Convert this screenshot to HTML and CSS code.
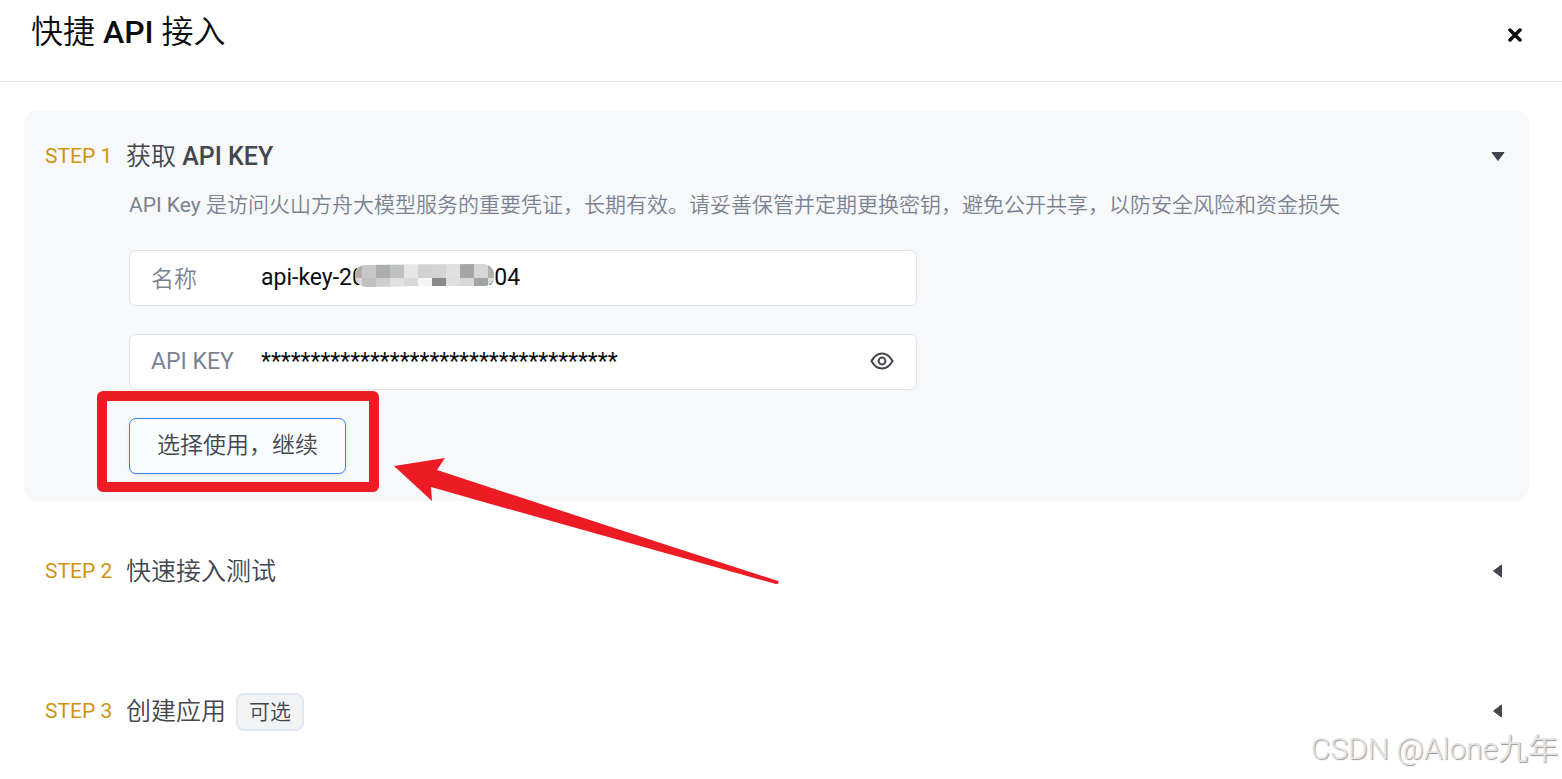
FILE: index.html
```html
<!DOCTYPE html>
<html lang="zh-CN">
<head>
  <meta charset="UTF-8" />
  <meta name="viewport" content="width=device-width, initial-scale=1.0" />
  <title>快捷 API 接入</title>
  <link rel="stylesheet" href="styles.css">
</head>
<body>
  <header class="drawer-header">
    <h1>快捷 <b>API</b> 接入</h1>
    <button type="button" class="close-btn" aria-label="关闭">
      <svg width="14" height="14" viewBox="0 0 14 14"><path d="M2 2L12 12M12 2L2 12" /></svg>
    </button>
  </header>

  <main class="steps">
    <!-- Step 1 -->
    <section class="step step-open">
      <div class="step-head">
        <span class="step-no">STEP 1</span>
        <h2>获取 <b>API KEY</b></h2>
        <button type="button" class="toggle" aria-label="收起" aria-expanded="true">
          <svg width="14" height="14" viewBox="0 0 14 14"><path d="M1 3.5H13L7 11.5Z" /></svg>
        </button>
      </div>
      <form class="step-body">
        <p class="desc">API Key 是访问火山方舟大模型服务的重要凭证，长期有效。请妥善保管并定期更换密钥，避免公开共享，以防安全风险和资金损失</p>
        <div class="field">
          <label for="key_name">名称</label>
          <input type="text" id="key_name" name="key_name" value="api-key-20000000000004" readonly />
          <svg class="mosaic" width="139" height="23" viewBox="0 0 139 23">
            <clipPath id="mask"><path d="M10 1L128 0Q139 1 139 11Q139 21 130 22L60 22L12 23Q0 22 0 11Q0 2 10 1Z" /></clipPath>
            <g clip-path="url(#mask)">
              <rect width="139" height="23" fill="#dcdcdc" />
              <rect width="7" height="14" fill="#b0b0b0" />
              <rect x="7" width="14" height="14" fill="#c8c8c8" />
              <rect x="21" width="14" height="14" fill="#acaeae" />
              <rect x="35" width="14" height="14" fill="#bfc1c1" />
              <rect x="49" width="14" height="14" fill="#e6e6e6" />
              <rect x="63" width="14" height="14" fill="#d0d2d2" />
              <rect x="77" width="14" height="14" fill="#d4d4d4" />
              <rect x="91" width="14" height="14" fill="#e0e0e0" />
              <rect x="105" width="14" height="14" fill="#a6a6a6" />
              <rect x="119" width="14" height="14" fill="#d6d6d6" />
              <rect x="133" width="6" height="14" fill="#b0b0b0" />
              <rect x="7" y="14" width="14" height="9" fill="#c0c0c0" />
              <rect x="21" y="14" width="14" height="9" fill="#cecece" />
              <rect x="35" y="14" width="14" height="9" fill="#e0e0e0" />
              <rect x="49" y="14" width="14" height="9" fill="#d8d8d8" />
              <rect x="63" y="14" width="14" height="9" fill="#f5f5f5" />
              <rect x="77" y="14" width="14" height="9" fill="#8a8a8a" />
              <rect x="91" y="14" width="14" height="9" fill="#dedede" />
              <rect x="105" y="14" width="14" height="9" fill="#d8d8d8" />
              <rect x="119" y="14" width="14" height="9" fill="#a2a2a2" />
            </g>
          </svg>
        </div>
        <div class="field">
          <label for="api_key">API KEY</label>
          <input type="text" id="api_key" name="api_key" value="************************************" readonly />
          <button type="button" class="eye-btn" aria-label="显示">
            <svg width="24" height="20" viewBox="0 0 24 20"><path d="M1.500 10C7 0 17 0 22.500 10C17 20 7 20 1.500 10Z" /><circle cx="12" cy="10" r="3.400" /></svg>
          </button>
        </div>
        <div class="action">
          <button type="button" class="continue-btn">选择使用，继续</button>
          <svg class="marker" width="686" height="198" viewBox="0 0 686 198">
            <rect x="6" y="6" width="272" height="91" rx="1" />
            <path d="M298 76L349 68L341 80Q490 129 682 191Q684 194 680 194Q500 144 335 97L336 111Z" />
          </svg>
        </div>
      </form>
    </section>

    <!-- Step 2 -->
    <section class="step">
      <div class="step-head">
        <span class="step-no">STEP 2</span>
        <h2>快速接入测试</h2>
        <button type="button" class="toggle" aria-label="展开" aria-expanded="false">
          <svg width="14" height="14" viewBox="0 0 14 14"><path d="M10.500 1V13L2.500 7Z" /></svg>
        </button>
      </div>
    </section>

    <!-- Step 3 -->
    <section class="step">
      <div class="step-head">
        <span class="step-no">STEP 3</span>
        <h2>创建应用</h2>
        <span class="tag">可选</span>
        <button type="button" class="toggle" aria-label="展开" aria-expanded="false">
          <svg width="14" height="14" viewBox="0 0 14 14"><path d="M10.500 1V13L2.500 7Z" /></svg>
        </button>
      </div>
    </section>
  </main>

  <div class="watermark">CSDN @Alone九年</div>
</body>
</html>
```

FILE: styles.css
```css
* {
  box-sizing: border-box;
}

body {
  font-family: Roboto, "Noto Sans CJK SC DemiLight", "Noto Sans CJK SC", sans-serif;
  font-size: 23px;
  color: #42464e;
  background-color: #fff;
  margin: 0;
  min-height: 100vh;
  position: relative;
  overflow-x: hidden;
}

h1,
h2,
p {
  margin: 0;
}

b {
  font-weight: 500;
}

button {
  font: inherit;
  color: inherit;
  background: none;
  border: none;
  padding: 0;
  cursor: pointer;
}

svg {
  display: block;
}

.drawer-header {
  display: flex;
  align-items: flex-start;
  justify-content: space-between;
  padding: 8px 40px 19px 31px;
  border-bottom: 1px solid #e5e6e8;
}

h1 {
  font-size: 32px;
  line-height: 48px;
  font-weight: 400;
  color: #0c0d0e;
}

.close-btn {
  height: 54px;
}

.close-btn path {
  stroke: #0c0d0e;
  stroke-width: 3.5;
  stroke-linecap: round;
}

.steps {
  display: flex;
  flex-direction: column;
  gap: 24px;
  padding: 28px 33px 0 24px;
}

.step {
  padding: 22px 24px 20px 21px;
  min-height: 116px;
  border-radius: 14px;
}

.step:last-child {
  min-height: 0;
}

.step-open {
  background-color: #f7f8fa;
  padding-bottom: 27px;
}

.step-head {
  display: flex;
  align-items: center;
  height: 48px;
}

.step-no {
  width: 81px;
  font-size: 21px;
  color: #d1930d;
}

h2 {
  padding-top: 2px;
  font-size: 25px;
  line-height: 36px;
  font-weight: 400;
}

.tag {
  margin: 2px 0 0 10px;
  padding: 0 11px;
  font-size: 21px;
  line-height: 34px;
  background-color: #f2f3f5;
  border: 2px solid #e2e8f2;
  border-radius: 8px;
}

.toggle {
  margin-left: auto;
}

.toggle path {
  fill: #42464e;
  stroke: #42464e;
  stroke-linejoin: round;
}

.step-body {
  display: flex;
  flex-direction: column;
  gap: 28px;
  margin-left: 84px;
}

.desc {
  font-size: 21px;
  line-height: 30px;
  padding: 10px 0 2px;
  color: #7a8292;
}

.field {
  position: relative;
  display: flex;
  align-items: center;
  width: 100%;
  max-width: 788px;
  height: 56px;
  padding: 0 22px 2px 21px;
  background-color: #fff;
  border: 1px solid #dde2e9;
  border-radius: 7px;
}

.field label {
  width: 110px;
  color: #7a8292;
}

.field input {
  flex: 1;
  min-width: 0;
  padding: 0;
  border: none;
  outline: none;
  font: inherit;
  color: #0c0d0e;
}

.mosaic {
  position: absolute;
  left: 225px;
  top: 13px;
}

.eye-btn path,
.eye-btn circle {
  fill: none;
  stroke: #42464e;
  stroke-width: 2;
}

.action {
  position: relative;
}

.continue-btn {
  height: 56px;
  padding: 0 27px 6px;
  background-color: #fbfcfe;
  border: 1px solid #3b82f6;
  border-radius: 7px;
  box-shadow: 0 1px 3px rgba(0, 0, 0, 0.1);
}

/* red frame and arrow over the button */
.marker {
  position: absolute;
  left: -33px;
  top: -28px;
  pointer-events: none;
}

.marker rect {
  fill: none;
  stroke: #ed1c24;
  stroke-width: 10;
  stroke-linejoin: round;
}

.marker path {
  fill: #ed1c24;
}

.watermark {
  position: absolute;
  right: 4px;
  bottom: 8px;
  font-size: 30px;
  line-height: 44px;
  font-weight: 300;
  color: #e4e4e4;
  text-shadow: 1px 1px 1px #999;
}
```
